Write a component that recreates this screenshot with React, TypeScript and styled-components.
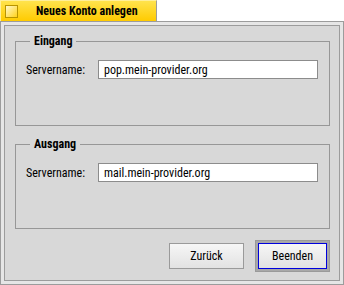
import React from "react";
import styled, { createGlobalStyle } from "styled-components";

const Global = createGlobalStyle`
  body {
    margin: 0;
    background: #ffffff;
    font-family: "Roboto Condensed", "Noto Sans", sans-serif;
    font-size: 12px;
    color: #000;
  }
`;

const Window = styled.div`
  width: 344px;
  height: 285px;
  display: flex;
  flex-direction: column;
`;

const Tab = styled.div`
  width: 157px;
  height: 21px;
  box-sizing: border-box;
  display: flex;
  align-items: center;
  gap: 18px;
  padding-left: 4px;
  background: linear-gradient(#ffe34d, #ffcb00);
  border-top: 1px solid #ffef99;
  border-left: 1px solid #ffef99;
  border-right: 1px solid #9c9c9c;
`;

const ZoomBox = styled.div`
  width: 13px;
  height: 13px;
  box-sizing: border-box;
  border: 1px solid #b89400;
  background: linear-gradient(135deg, #fff8cc, #ffd21a);
`;

const TabTitle = styled.span`
  font-weight: bold;
  font-size: 12px;
`;

const Frame = styled.div`
  flex: 1;
  display: flex;
  border: 1px solid #9c9c9c;
  background: #e6e6e6;
  padding: 3px;
`;

const Content = styled.div`
  flex: 1;
  display: flex;
  flex-direction: column;
  border: 1px solid #9c9c9c;
  background: #d8d8d8;
  padding: 8px 9px 0 10px;
`;

const Group = styled.fieldset`
  margin: 0;
  padding: 0 11px 46px 10px;
  border: 1px solid #979797;
  & + & {
    margin-top: 11px;
  }
`;

const Legend = styled.legend`
  font-weight: bold;
  padding: 0 4px;
  margin-left: 4px;
  line-height: 14px;
`;

const Row = styled.div`
  display: flex;
  align-items: center;
  margin-top: 12px;
`;

const Label = styled.label`
  width: 72px;
  flex: none;
`;

const Input = styled.input`
  flex: 1;
  min-width: 0;
  height: 19px;
  box-sizing: border-box;
  border: 1px solid #8c8c8c;
  background: #fff;
  padding: 0 5px;
  font-family: inherit;
  font-size: 12px;
  color: #000;
  outline: none;
`;

const Buttons = styled.div`
  display: flex;
  justify-content: flex-end;
  align-items: center;
  gap: 11px;
  margin-top: 11px;
`;

const DefaultFrame = styled.div`
  padding: 2px;
  border: 1px solid #9a9a9a;
  background: #a8a8a8;
  display: flex;
`;

const Button = styled.button<{ $default?: boolean }>`
  width: ${(p) => (p.$default ? "69px" : "75px")};
  height: 26px;
  box-sizing: border-box;
  border: 1px solid ${(p) => (p.$default ? "#0000dd" : "#9a9a9a")};
  background: linear-gradient(#f6f6f6, #e2e2e2);
  font-family: inherit;
  font-size: 12px;
  color: #000;
  padding: 0;
`;

export default function App() {
  return (
    <Window>
      <Global />
      <Tab>
        <ZoomBox />
        <TabTitle>Neues Konto anlegen</TabTitle>
      </Tab>
      <Frame>
        <Content>
          <Group>
            <Legend>Eingang</Legend>
            <Row>
              <Label>Servername:</Label>
              <Input defaultValue="pop.mein-provider.org" />
            </Row>
          </Group>
          <Group>
            <Legend>Ausgang</Legend>
            <Row>
              <Label>Servername:</Label>
              <Input defaultValue="mail.mein-provider.org" />
            </Row>
          </Group>
          <Buttons>
            <Button>Zurück</Button>
            <DefaultFrame>
              <Button $default>Beenden</Button>
            </DefaultFrame>
          </Buttons>
        </Content>
      </Frame>
    </Window>
  );
}
